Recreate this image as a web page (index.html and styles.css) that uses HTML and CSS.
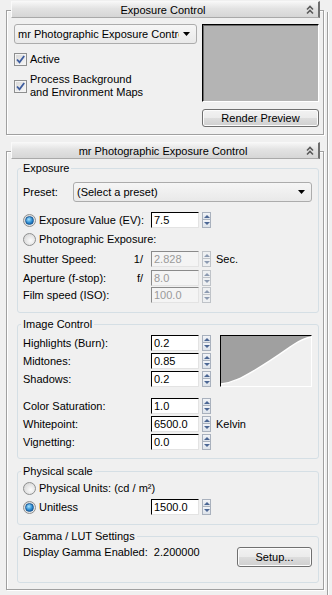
FILE: index.html
```html
<!DOCTYPE html>
<html>
<head>
<meta charset="utf-8">
<link rel="stylesheet" href="styles.css">
</head>
<body>
<div class="page">
  <div class="main">
    <section class="rollout">
      <div class="rollout-head">
        <span></span>
        <span class="title">Exposure Control</span>
        <svg class="collapse" width="8" height="10" viewBox="0 0 8 10"><path d="M1 4.5L4 1.5L7 4.5M1 8.5L4 5.5L7 8.5" fill="none" stroke="#5a5a5a" stroke-width="1.6"/></svg>
      </div>
      <div class="frame frame-top">
        <div class="top-cols">
          <div class="left-col">
            <div class="combo">
              <span class="combo-text">mr Photographic Exposure Control</span>
              <svg class="arrow" width="7" height="4" viewBox="0 0 7 4"><polygon points="0,0 7,0 3.5,4" fill="#000"/></svg>
            </div>
            <div class="check-row first">
              <span class="check"><svg width="11" height="11" viewBox="0 0 11 11"><path d="M2 5.5L4.5 8.3L9.2 2" fill="none" stroke="#3d5c9e" stroke-width="1.8"/></svg></span>
              <span>Active</span>
            </div>
            <div class="check-row second">
              <span class="check"><svg width="11" height="11" viewBox="0 0 11 11"><path d="M2 5.5L4.5 8.3L9.2 2" fill="none" stroke="#3d5c9e" stroke-width="1.8"/></svg></span>
              <span class="two-line">Process Background<br>and Environment Maps</span>
            </div>
          </div>
          <div class="right-col">
            <div class="preview"></div>
            <div class="btn render-btn">Render Preview</div>
          </div>
        </div>
      </div>
    </section>

    <section class="rollout second-rollout">
      <div class="rollout-head">
        <span></span>
        <span class="title">mr Photographic Exposure Control</span>
        <svg class="collapse" width="8" height="10" viewBox="0 0 8 10"><path d="M1 4.5L4 1.5L7 4.5M1 8.5L4 5.5L7 8.5" fill="none" stroke="#5a5a5a" stroke-width="1.6"/></svg>
      </div>
      <div class="frame frame-main">
        <fieldset class="group g1">
          <legend>Exposure</legend>
          <div class="row preset-row">
            <span class="preset-lbl">Preset:</span>
            <div class="combo preset-combo">
              <span class="combo-text">(Select a preset)</span>
              <svg class="arrow" width="7" height="4" viewBox="0 0 7 4"><polygon points="0,0 7,0 3.5,4" fill="#000"/></svg>
            </div>
          </div>
          <div class="row r-ev">
            <div class="lbl"><span class="radio on"></span><span class="name">Exposure Value (EV):</span></div>
            <span class="num">7.5</span>
            <span class="spin"><span class="up"></span><span class="down"></span></span>
          </div>
          <div class="row r-photo">
            <div class="lbl"><span class="radio"></span><span class="name">Photographic Exposure:</span></div>
          </div>
          <div class="row r-shutter">
            <div class="lbl"><span class="name">Shutter Speed:</span><span class="pre">1/</span></div>
            <span class="num off">2.828</span>
            <span class="spin off"><span class="up"></span><span class="down"></span></span>
            <span class="unit">Sec.</span>
          </div>
          <div class="row r-aperture">
            <div class="lbl"><span class="name">Aperture (f-stop):</span><span class="pre">f/</span></div>
            <span class="num off">8.0</span>
            <span class="spin off"><span class="up"></span><span class="down"></span></span>
          </div>
          <div class="row r-film">
            <div class="lbl"><span class="name">Film speed (ISO):</span></div>
            <span class="num off">100.0</span>
            <span class="spin off"><span class="up"></span><span class="down"></span></span>
          </div>
        </fieldset>

        <fieldset class="group g2">
          <legend>Image Control</legend>
          <div class="tone-block">
            <div class="tone-rows">
              <div class="row">
                <div class="lbl"><span class="name">Highlights (Burn):</span></div>
                <span class="num">0.2</span>
                <span class="spin"><span class="up"></span><span class="down"></span></span>
              </div>
              <div class="row r-gap2">
                <div class="lbl"><span class="name">Midtones:</span></div>
                <span class="num">0.85</span>
                <span class="spin"><span class="up"></span><span class="down"></span></span>
              </div>
              <div class="row r-gap2">
                <div class="lbl"><span class="name">Shadows:</span></div>
                <span class="num">0.2</span>
                <span class="spin"><span class="up"></span><span class="down"></span></span>
              </div>
            </div>
            <div class="curve">
              <svg width="90" height="50" viewBox="0 0 90 50">
                <path d="M0 0H90V1C84 2 78 5 72 9C62 16 48 26 34 34C22 41 12 47 0 48Z" fill="#a0a0a0"/>
                <path d="M0 48C12 47 22 41 34 34C48 26 62 16 72 9C78 5 84 2 90 1" fill="none" stroke="#fff" stroke-width="1.4"/>
              </svg>
            </div>
          </div>
          <div class="row r-sat">
            <div class="lbl"><span class="name">Color Saturation:</span></div>
            <span class="num">1.0</span>
            <span class="spin"><span class="up"></span><span class="down"></span></span>
          </div>
          <div class="row r-gap2">
            <div class="lbl"><span class="name">Whitepoint:</span></div>
            <span class="num">6500.0</span>
            <span class="spin"><span class="up"></span><span class="down"></span></span>
            <span class="unit">Kelvin</span>
          </div>
          <div class="row r-gap2">
            <div class="lbl"><span class="name">Vignetting:</span></div>
            <span class="num">0.0</span>
            <span class="spin"><span class="up"></span><span class="down"></span></span>
          </div>
        </fieldset>

        <fieldset class="group g3">
          <legend>Physical scale</legend>
          <div class="row r-units">
            <div class="lbl wide"><span class="radio"></span><span class="name">Physical Units: (cd / m²)</span></div>
          </div>
          <div class="row r-unitless">
            <div class="lbl"><span class="radio on"></span><span class="name">Unitless</span></div>
            <span class="num">1500.0</span>
            <span class="spin"><span class="up"></span><span class="down"></span></span>
          </div>
        </fieldset>

        <fieldset class="group g4">
          <legend>Gamma / LUT Settings</legend>
          <div class="gamma-row">
            <span class="gamma-text">Display Gamma Enabled:&nbsp; 2.200000</span>
            <div class="btn setup-btn">Setup...</div>
          </div>
        </fieldset>
      </div>
    </section>
  </div>
  <div class="scroll"></div>
</div>
</body>
</html>
```
FILE: styles.css
```css
* { box-sizing: border-box; }

body {
  margin: 0;
  background: #f0f0f0;
  font: 11px/14px "Liberation Sans", Arial, sans-serif;
  color: #000;
}

.page {
  display: flex;
  height: 595px;
  overflow: hidden;
}

.main {
  width: 327px;
  padding: 1px 0 0 6px;
}

.scroll {
  width: 5px;
  margin-top: 12px;
  border-left: 1px solid #a0a0a0;
  box-shadow: inset 1px 0 0 #fff;
}

.rollout { width: 318px; }
.second-rollout { margin-top: 7px; }

.rollout-head {
  position: relative;
  z-index: 1;
  margin-left: 5px;
  width: 309px;
  height: 17px;
  display: grid;
  grid-template-columns: 1fr auto 1fr;
  align-items: center;
  padding-right: 4px;
  background: linear-gradient(#f6f6f6, #e2e2e2 45%, #d6d6d6);
  border-top: 1px solid #f8f8f8;
  border-left: 1px solid #fafafa;
  border-bottom: 1px solid #a9a9a9;
  border-right: 2px solid #6f6f6f;
}

.rollout-head .title { line-height: 14px; }
.collapse { justify-self: end; }

.frame {
  margin-top: -8px;
  border: 1px solid #a0a0a0;
  box-shadow: inset 1px 1px 0 #fff, 1px 1px 0 #fff;
}

.frame-top { padding: 13px 4px 7px 7px; }

.top-cols { display: flex; gap: 5px; }
.left-col { width: 183px; }
.right-col { width: 117px; }

.combo {
  height: 20px;
  display: flex;
  align-items: center;
  border: 1px solid #acacac;
  border-radius: 3px;
  background: linear-gradient(#f6f6f6, #e9e9e9);
  padding: 0 6px 0 3px;
}

.combo-text {
  flex: 1;
  overflow: hidden;
  white-space: nowrap;
}

.arrow { flex: none; margin-left: 4px; }

.check-row { display: flex; align-items: center; gap: 3px; }
.check-row.first { margin-top: 8px; }
.check-row.second { margin-top: 7px; }
.two-line { line-height: 13px; }

.check {
  width: 13px;
  height: 13px;
  flex: none;
  border: 1px solid #8e8f8f;
  background: linear-gradient(135deg, #d6d6d6, #f8f8f8);
  box-shadow: inset 0 0 0 1px #f4f4f4;
  display: flex;
  align-items: center;
  justify-content: center;
}

.preview {
  height: 78px;
  background: #b4b4b4;
  border-top: 1px solid #000;
  border-left: 1px solid #000;
  border-right: 1px solid #fff;
  border-bottom: 1px solid #fff;
  box-shadow: inset 1px 1px 0 #696969;
}

.btn {
  display: flex;
  align-items: center;
  justify-content: center;
  border: 1px solid #707070;
  border-radius: 3px;
  background: linear-gradient(#f2f2f2, #ebebeb 50%, #dddddd 51%, #cfcfcf);
  box-shadow: inset 0 0 0 1px #fcfcfc;
}

.render-btn { margin-top: 7px; height: 18px; }

.frame-main { padding: 9px 4px 6px 10px; }

.group {
  margin: 0;
  min-width: 0;
  padding: 0 6px 0 5px;
  border: 1px solid #d5dfe5;
  border-radius: 3px;
}

.group legend {
  padding: 0 2px;
  margin-left: -2px;
  line-height: 14px;
}

.g1 { padding-bottom: 9px; }
.g2 { margin-top: 4px; padding-bottom: 8px; }
.g3 { margin-top: 5px; padding-bottom: 9px; }
.g4 { margin-top: 4px; padding-bottom: 15px; }

.row {
  display: flex;
  align-items: center;
  height: 16px;
}

.preset-row { height: 20px; margin-top: 7px; }
.preset-lbl { width: 50px; }
.preset-combo { flex: 1; }

.r-ev { margin-top: 10px; }
.r-photo { margin-top: 3px; }
.r-shutter { margin-top: 4px; }
.r-aperture { margin-top: 3px; }
.r-film { margin-top: 1px; }
.r-gap2 { margin-top: 2px; }
.r-sat { margin-top: 11px; }
.r-units { margin-top: 2px; }
.r-unitless { margin-top: 3px; }

.lbl {
  width: 128px;
  flex: none;
  display: flex;
  align-items: center;
}

.lbl.wide { width: auto; }
.lbl .name { flex: 1; white-space: nowrap; }
.lbl .pre { padding-right: 8px; }

.radio {
  width: 13px;
  height: 13px;
  flex: none;
  margin-right: 3px;
  border-radius: 50%;
  border: 1px solid #8e8f8f;
  background: radial-gradient(circle at 60% 60%, #fbfbfb, #dcdcdc 70%, #cfcfcf);
  display: flex;
  align-items: center;
  justify-content: center;
}

.radio.on::after {
  content: "";
  width: 7px;
  height: 7px;
  border-radius: 50%;
  background: radial-gradient(circle at 40% 35%, #a8e4ff, #2b8ad0 55%, #12508f);
  border: 1px solid #1c5a96;
}

.num {
  width: 48px;
  height: 16px;
  flex: none;
  padding-left: 2px;
  line-height: 14px;
  background: #fff;
  border-top: 1px solid #000;
  border-left: 1px solid #000;
  border-right: 1px solid #e3e3e3;
  border-bottom: 1px solid #e3e3e3;
}

.num.off {
  color: #9a9a9a;
  background: #f4f4f4;
  border-top-color: #8a8a8a;
  border-left-color: #8a8a8a;
}

.spin {
  width: 9px;
  height: 16px;
  flex: none;
  margin-left: 3px;
  display: flex;
  flex-direction: column;
}

.spin span {
  height: 8px;
  border: 1px solid #a9b1bd;
  background: linear-gradient(#f2f4f8, #dde3ea);
  display: flex;
  align-items: center;
  justify-content: center;
}

.spin .down { border-top: none; height: 8px; }

.spin .up::after,
.spin .down::after {
  content: "";
  border-left: 3px solid transparent;
  border-right: 3px solid transparent;
}

.spin .up::after { border-bottom: 3px solid #4c6794; }
.spin .down::after { border-top: 3px solid #4c6794; }

.spin.off span { border-color: #bfc3c8; background: #eef0f2; }
.spin.off .up::after { border-bottom-color: #8d9bb1; }
.spin.off .down::after { border-top-color: #8d9bb1; }

.unit { margin-left: 5px; }

.tone-block {
  display: flex;
  margin-top: 4px;
}

.tone-rows { flex: 1; }

.curve {
  width: 92px;
  height: 52px;
  border-top: 1px solid #000;
  border-left: 1px solid #000;
  border-right: 1px solid #fff;
  border-bottom: 1px solid #fff;
  background: #f0f0f0;
  line-height: 0;
}

.gamma-row {
  display: flex;
  justify-content: space-between;
  align-items: flex-start;
  margin-top: 2px;
}

.setup-btn {
  width: 75px;
  height: 20px;
  margin-top: 2px;
}
```
